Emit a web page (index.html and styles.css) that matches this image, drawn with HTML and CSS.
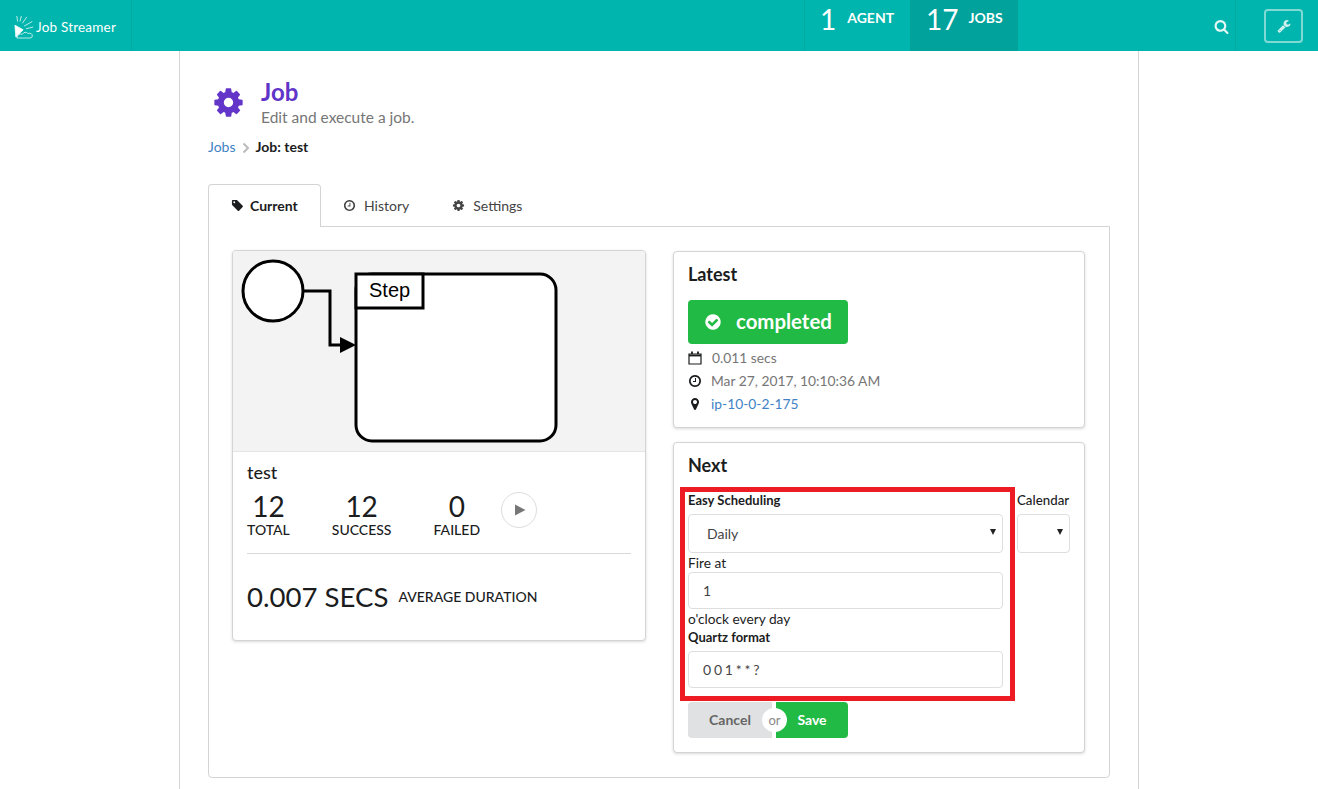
FILE: index.html
```html
<!doctype html>
<html>
<head>
<meta charset="UTF-8">
<title>Job Streamer</title>
<link rel="stylesheet" href="styles.css">
</head>
<body>
<header class="topbar">
	<a class="brand">
		<svg class="brand_logo" viewBox="0 0 24 26" fill="none" stroke="#fff" stroke-width="0.8">
			<path d="M1 11 L10 16 L2 24 Z" fill="#fff"/>
			<path d="M3 1 L4 7 M8 1 L6.500 7 M14 2 L9 9 M20 7 L11 12 M21 13 L13 15"/>
			<path d="M3 25 Q5 19 9 21 Q12 17 15 20 Q20 19 20 23 Q20 25 17 25 Z" fill="#00b5ad"/>
		</svg>
		<span>Job Streamer</span>
	</a>
	<div class="topbar_stats">
		<a class="stat_item"><b>1</b><span>AGENT</span></a>
		<a class="stat_item active"><b>17</b><span>JOBS</span></a>
	</div>
	<div class="topbar_search">
		<svg class="ico" viewBox="0 0 1792 1792"><path d="M1216 832q0-185-131.500-316.500t-316.500-131.500-316.500 131.500-131.500 316.500 131.500 316.500 316.500 131.500 316.500-131.500 131.500-316.500zm512 832q0 52-38 90t-90 38q-54 0-90-38l-343-342q-179 124-399 124-143 0-273.500-55.500t-225-150-150-225-55.500-273.500 55.500-273.500 150-225 225-150 273.500-55.500 273.500 55.500 225 150 150 225 55.500 273.500q0 220-124 399l343 343q37 37 37 90z"/></svg>
	</div>
	<div class="topbar_tool">
		<button class="tool_btn">
			<svg class="ico" viewBox="0 0 1792 1792"><path d="M448 1472q0-26-19-45t-45-19-45 19-19 45 19 45 45 19 45-19 19-45zm644-420l-682 682q-37 37-90 37-52 0-91-37l-106-108q-38-36-38-90 0-53 38-91l681-681q39 98 114.500 173.500t173.500 114.500zm634-435q0 39-23 106-47 134-164.500 217.500t-258.500 83.500q-185 0-316.500-131.500t-131.500-316.500 131.500-316.500 316.500-131.500q58 0 121.500 16.500t107.500 46.500q16 11 16 28t-16 28l-293 169v224l193 107q5-3 79-48.500t135.500-81 70.500-35.500q15 0 23.500 10t8.500 25z"/></svg>
		</button>
	</div>
</header>

<main class="page">
	<div class="page_head">
		<svg class="page_icon" viewBox="0 0 1792 1792"><path d="M1152 896q0-106-75-181t-181-75-181 75-75 181 75 181 181 75 181-75 75-181zm512-109v222q0 12-8 23t-20 13l-185 28q-19 54-39 91 35 50 107 138 10 12 10 25t-9 23q-27 37-99 108t-94 71q-12 0-26-9l-138-108q-44 23-91 38-16 136-29 186-7 28-36 28h-222q-14 0-24.500-8.500t-11.500-21.500l-28-184q-49-16-90-37l-141 107q-10 9-25 9-14 0-25-11-126-114-165-168-7-10-7-23 0-12 8-23 15-21 51-66.500t54-70.500q-27-50-41-99l-183-27q-13-2-21-12.500t-8-23.500v-222q0-12 8-23t19-13l186-28q14-46 39-92-40-57-107-138-10-12-10-24 0-10 9-23 26-36 98.500-107.500t94.500-71.500q13 0 26 10l138 107q44-23 91-38 16-136 29-186 7-28 36-28h222q14 0 24.500 8.500t11.500 21.500l28 184q49 16 90 37l142-107q9-9 24-9 13 0 25 10 129 119 165 170 7 8 7 22 0 12-8 23-15 21-51 66.500t-54 70.500q26 50 41 98l183 28q13 2 21 12.500t8 23.500z"/></svg>
		<div>
			<h1>Job</h1>
			<p>Edit and execute a job.</p>
		</div>
	</div>
	<div class="crumbs">
		<a>Jobs</a>
		<svg class="crumb_sep" viewBox="0 0 8 12" fill="none" stroke="#bbb" stroke-width="2"><path d="M1.500 1.500 L6 6 L1.500 10.500"/></svg>
		<b>Job: test</b>
	</div>

	<nav class="tabs">
		<a class="tab active">
			<svg class="ico" viewBox="0 0 1792 1792"><path d="M576 448q0-53-37.500-90.500t-90.500-37.500-90.500 37.500-37.500 90.500 37.500 90.500 90.500 37.500 90.500-37.500 37.500-90.500zm1067 576q0 53-37 90l-491 492q-39 37-91 37-53 0-90-37l-715-716q-38-37-64.500-101t-26.500-117v-416q0-52 38-90t90-38h416q53 0 117 26.500t102 64.500l715 714q37 39 37 91z"/></svg>
			Current
		</a>
		<a class="tab">
			<svg class="ico" viewBox="0 0 1792 1792"><path d="M1024 544v448q0 14-9 23t-23 9h-320q-14 0-23-9t-9-23v-64q0-14 9-23t23-9h224v-352q0-14 9-23t23-9h64q14 0 23 9t9 23zm416 352q0-148-73-273t-198-198-273-73-273 73-198 198-73 273 73 273 198 198 273 73 273-73 198-198 73-273zm224 0q0 209-103 385.500t-279.500 279.500-385.500 103-385.500-103-279.500-279.500-103-385.500 103-385.500 279.500-279.500 385.500-103 385.500 103 279.500 279.500 103 385.500z"/></svg>
			History
		</a>
		<a class="tab">
			<svg class="ico" viewBox="0 0 1792 1792"><path d="M1152 896q0-106-75-181t-181-75-181 75-75 181 75 181 181 75 181-75 75-181zm512-109v222q0 12-8 23t-20 13l-185 28q-19 54-39 91 35 50 107 138 10 12 10 25t-9 23q-27 37-99 108t-94 71q-12 0-26-9l-138-108q-44 23-91 38-16 136-29 186-7 28-36 28h-222q-14 0-24.500-8.500t-11.500-21.500l-28-184q-49-16-90-37l-141 107q-10 9-25 9-14 0-25-11-126-114-165-168-7-10-7-23 0-12 8-23 15-21 51-66.500t54-70.500q-27-50-41-99l-183-27q-13-2-21-12.500t-8-23.500v-222q0-12 8-23t19-13l186-28q14-46 39-92-40-57-107-138-10-12-10-24 0-10 9-23 26-36 98.500-107.500t94.500-71.500q13 0 26 10l138 107q44-23 91-38 16-136 29-186 7-28 36-28h222q14 0 24.500 8.500t11.500 21.500l28 184q49 16 90 37l142-107q9-9 24-9 13 0 25 10 129 119 165 170 7 8 7 22 0 12-8 23-15 21-51 66.500t-54 70.500q26 50 41 98l183 28q13 2 21 12.500t8 23.500z"/></svg>
			Settings
		</a>
	</nav>

	<section class="tab_body">
		<article class="card job_card">
			<div class="diagram">
				<svg viewBox="0 0 412 200" width="412" height="200">
					<circle cx="40" cy="40" r="30" fill="#fff" stroke="#000" stroke-width="3"/>
					<path d="M70 40 H97 V94 H108" fill="none" stroke="#000" stroke-width="3"/>
					<path d="M107 86 L123 94 L107 102 Z" fill="#000"/>
					<rect x="123" y="23" width="200" height="167" rx="16" fill="#fff" stroke="#000" stroke-width="3"/>
					<rect x="123" y="23" width="67" height="34" fill="#fff" stroke="#000" stroke-width="3"/>
					<text x="136" y="46" class="step_label">Step</text>
				</svg>
			</div>
			<div class="job_body">
				<h3>test</h3>
				<div class="job_stats">
					<div class="job_stat"><b>12</b><span>TOTAL</span></div>
					<div class="job_stat"><b>12</b><span>SUCCESS</span></div>
					<div class="job_stat"><b>0</b><span>FAILED</span></div>
					<button class="play_btn"><svg viewBox="0 0 12 12" width="12" height="12"><path d="M1 0.500 L11.500 6 L1 11.500 Z" fill="#777"/></svg></button>
				</div>
				<div class="job_avg">
					<b>0.007 SECS</b>
					<span>AVERAGE DURATION</span>
				</div>
			</div>
		</article>

		<div class="side">
			<article class="card latest_card">
				<h3>Latest</h3>
				<div class="status_btn">
					<svg class="ico" viewBox="0 0 1792 1792"><path d="M1412 734q0-28-18-46l-91-90q-19-19-45-19t-45 19l-408 407-226-226q-19-19-45-19t-45 19l-91 90q-18 18-18 46 0 27 18 45l362 362q19 19 45 19 27 0 46-19l543-543q18-18 18-45zm252 162q0 209-103 385.500t-279.500 279.500-385.500 103-385.500-103-279.500-279.500-103-385.500 103-385.500 279.500-279.500 385.500-103 385.500 103 279.500 279.500 103 385.500z"/></svg>
					<span>completed</span>
				</div>
				<ul class="meta">
					<li>
						<svg class="ico ico_line" viewBox="0 0 14 14"><path d="M1 3 H13 V13 H1 Z" stroke-width="1.200"/><path d="M1 4.500 H13" stroke-width="1.800"/><path d="M4 0.500 V3 M10 0.500 V3" stroke-width="1.800"/></svg>
						<span class="meta_pad">0.011 secs</span>
					</li>
					<li>
						<svg class="ico" viewBox="0 0 1792 1792"><path d="M1024 544v448q0 14-9 23t-23 9h-320q-14 0-23-9t-9-23v-64q0-14 9-23t23-9h224v-352q0-14 9-23t23-9h64q14 0 23 9t9 23zm416 352q0-148-73-273t-198-198-273-73-273 73-198 198-73 273 73 273 198 198 273 73 273-73 198-198 73-273zm224 0q0 209-103 385.500t-279.500 279.500-385.500 103-385.500-103-279.500-279.500-103-385.500 103-385.500 279.500-279.500 385.500-103 385.500 103 279.500 279.500 103 385.500z"/></svg>
						<span>Mar 27, 2017, 10:10:36 AM</span>
					</li>
					<li>
						<svg class="ico" viewBox="0 0 1792 1792"><path d="M1152 640q0-106-75-181t-181-75-181 75-75 181 75 181 181 75 181-75 75-181zm256 0q0 109-33 179l-364 774q-16 33-47.500 52t-67.500 19-67.500-19-46.500-52l-365-774q-33-70-33-179 0-212 150-362t362-150 362 150 150 362z"/></svg>
						<a>ip-10-0-2-175</a>
					</li>
				</ul>
			</article>

			<article class="card next_card">
				<h3>Next</h3>
				<form class="sched">
					<div class="sched_main">
						<label class="lbl_strong">Easy Scheduling</label>
						<div class="select_wrap">
							<select class="field"><option>Daily</option></select>
						</div>
						<label class="lbl_fire">Fire at</label>
						<input class="field" value="1">
						<div class="lbl_clock">o'clock every day</div>
						<label class="lbl_strong lbl_quartz">Quartz format</label>
						<input class="field field_quartz" value="0 0 1 * * ?">
					</div>
					<div class="sched_cal">
						<label class="lbl_strong lbl_cal">Calendar</label>
						<div class="select_wrap">
							<select class="field"><option></option></select>
						</div>
					</div>
				</form>
				<div class="btn_pair">
					<button type="button" class="btn_cancel">Cancel</button>
					<span class="btn_or">or</span>
					<button type="button" class="btn_save">Save</button>
				</div>
			</article>
		</div>
	</section>
</main>
</body>
</html>
```

FILE: styles.css
```css
*{box-sizing:border-box}
html,body{margin:0;height:100%}
body{
	font-family:"Lato","Noto Sans",sans-serif;
	font-size:14px;
	color:#1b1c1d;
	background:#fff;
	overflow:hidden;
}
a{color:#4183c4}
h1,h3,p,ul{margin:0;padding:0}
.ico{width:1em;height:1em;fill:currentColor;flex:none;display:block}
.ico_line{fill:none;stroke:currentColor}

/* top bar */
.topbar{
	display:flex;
	height:51px;
	background:#00b5ad;
	color:#fff;
}
.brand{
	display:flex;
	align-items:center;
	width:132px;
	padding:2px 0 0 14px;
	border-right:1px solid #00a8a0;
	color:#fff;
	font-size:13.500px;
	letter-spacing:.2px;
}
.brand_logo{width:22px;height:26px;flex:none}
.topbar_stats{
	display:flex;
	margin-left:672px;
	border-left:1px solid #00a8a0;
}
.stat_item{
	display:flex;
	align-items:flex-start;
	width:105px;
	padding:2px 0 0 15px;
	color:#fff;
}
.stat_item.active{
	width:108px;
	background:#00a29b;
	padding-left:16px;
}
.stat_item b{
	font-weight:400;
	font-size:28px;
	line-height:35px;
}
.stat_item span{
	margin-left:11px;
	font-weight:700;
	font-size:14px;
	line-height:32px;
}
.stat_item.active span{margin-left:10px}
.topbar_search{
	display:flex;
	align-items:center;
	justify-content:flex-end;
	width:217px;
	padding:2px 6px 0 0;
	font-size:15px;
	color:#e6f7f6;
}
.topbar_tool{
	display:flex;
	align-items:flex-start;
	flex:1;
	padding:9px 0 0 28px;
	border-left:1px solid #00a8a0;
}
.tool_btn{
	display:flex;
	align-items:center;
	justify-content:center;
	width:39px;
	height:34px;
	padding:0;
	background:none;
	border:2px solid #7fdad6;
	border-radius:4px;
	color:#cdeeec;
	font-size:14px;
}

/* page */
.page{
	width:960px;
	height:738px;
	margin:0 auto;
	padding:0 28px;
	border-left:1px solid #d4d4d5;
	border-right:1px solid #d4d4d5;
}
.page_head{
	display:flex;
	align-items:center;
	padding:26px 0 0 4px;
}
.page_icon{
	width:33px;
	height:33px;
	margin-right:16px;
	fill:#6435c9;
}
.page_head h1{
	font-size:24px;
	font-weight:700;
	line-height:30px;
	color:#5f35c9;
}
.page_head p{
	font-size:15.500px;
	line-height:20px;
	color:#767676;
}
.crumbs{
	display:flex;
	align-items:center;
	height:20px;
	margin-top:9px;
	font-size:14px;
}
.crumb_sep{width:8px;height:12px;margin:4px 6px 0 6px}
.crumbs b{font-weight:700}

.tabs{
	display:flex;
	margin-top:28px;
	height:42px;
}
.tab{
	display:flex;
	align-items:center;
	gap:8px;
	padding:1px 21px 0 22px;
	font-size:14px;
	color:#444;
}
.tab .ico{font-size:13px}
.tab.active{
	width:113px;
	gap:6px;
	padding-top:0;
	padding-bottom:1px;
	background:#fff;
	border:1px solid #d4d4d5;
	border-bottom:0;
	border-radius:4px 4px 0 0;
	color:#1b1c1d;
	font-weight:700;
	position:relative;
	z-index:1;
	height:43px;
}
.tab_body{
	display:flex;
	align-items:flex-start;
	gap:27px;
	height:552px;
	padding:23px 24px 0 23px;
	border:1px solid #d4d4d5;
	border-radius:0 0 4px 4px;
}

.card{
	background:#fff;
	border:1px solid #d4d4d5;
	border-radius:4px;
	box-shadow:0 1px 3px rgba(0,0,0,.15);
}
.card h3{font-size:18px;font-weight:700;line-height:24px}

/* job card */
.job_card{width:414px;height:391px}
.diagram{
	height:201px;
	background:#f3f3f3;
	border-bottom:1px solid #e4e4e4;
	border-radius:3px 3px 0 0;
}
.diagram svg{display:block}
.step_label{font-family:"Liberation Sans",sans-serif;font-size:20px;fill:#000}
.job_body{padding:8px 14px 0 14px}
.job_body h3{font-weight:500;color:#1b1c1d}
.job_stats{
	display:flex;
	align-items:flex-start;
	height:70px;
	padding-top:8px;
	border-bottom:1px solid #d9d9d9;
}
.job_stat{
	display:flex;
	flex-direction:column;
	align-items:center;
	margin-right:42px;
}
.job_stat b{font-weight:400;font-size:28px;line-height:28px}
.job_stat span{font-size:14px;font-weight:500;line-height:18px;margin-top:1px}
.play_btn{
	display:flex;
	align-items:center;
	justify-content:center;
	width:36px;
	height:36px;
	margin:0 0 0 -21px;
	padding:0 0 0 2px;
	background:#fff;
	border:1px solid #ddd;
	border-radius:50%;
}
.job_avg{
	display:flex;
	align-items:center;
	gap:10px;
	margin-top:26px;
}
.job_avg b{font-weight:400;font-size:27.600px;line-height:34px}
.job_avg span{font-size:14px;font-weight:500;padding-bottom:2px}

/* right column */
.side{width:412px;padding-top:1px;display:flex;flex-direction:column;gap:14px}
.latest_card{height:177px;padding:10px 14px 0 14px}
.status_btn{
	display:flex;
	align-items:center;
	gap:14px;
	width:160px;
	height:44px;
	margin-top:14px;
	padding-left:16px;
	background:#21ba45;
	border-radius:4px;
	color:#fff;
	font-size:20.400px;
	font-weight:700;
}
.status_btn .ico{font-size:18px}
.status_btn span{padding-bottom:2px}
.meta{list-style:none;margin-top:2px}
.meta li{
	display:flex;
	align-items:center;
	gap:9px;
	height:23px;
	font-size:13.800px;
	color:#767676;
}
.meta .ico{font-size:14px;color:#1b1c1d}
.meta .meta_pad{margin-left:1px}

.next_card{height:311px;padding:10px 14px 0 14px}
.sched{display:flex;gap:14px;margin-top:14px}
.sched_main{position:relative;width:315px}
.sched_main::after{
	content:"";
	position:absolute;
	top:-4px;
	left:-8px;
	right:-12px;
	bottom:-13px;
	border:5px solid #ed1c24;
	pointer-events:none;
}
.sched_cal{width:53px}
.sched label,.lbl_clock{display:block;font-size:13.700px;line-height:18px}
.sched .lbl_strong{font-size:13px;font-weight:700}
.sched .lbl_cal{font-size:13.300px;font-weight:500;white-space:nowrap}
.lbl_fire{margin-top:1px}
.sched .lbl_clock{margin-top:1px}
.lbl_quartz{margin-bottom:5px}
.field{
	display:block;
	width:100%;
	height:37px;
	padding:0 14px;
	background:#fff;
	border:1px solid #dedede;
	border-radius:4px;
	font-family:inherit;
	font-size:14px;
	color:#444;
	outline:0;
}
.field_quartz{word-spacing:-.800px}
.select_wrap{position:relative;margin-top:5px}
.select_wrap .field{
	height:39px;
	padding-left:18px;
	appearance:none;
	-webkit-appearance:none;
}
.select_wrap::after{
	content:"";
	position:absolute;
	right:7px;
	top:15px;
	border-left:3px solid transparent;
	border-right:3px solid transparent;
	border-top:6px solid #222;
}
.btn_pair{
	position:relative;
	display:flex;
	width:160px;
	height:36px;
	margin-top:14px;
	font-size:14px;
	font-weight:700;
}
.btn_pair button{
	height:36px;
	padding:0 0 1px 0;
	border:0;
	font:inherit;
}
.btn_cancel{
	width:84px;
	margin-right:4px;
	background:#e0e1e2;
	color:#666;
	border-radius:4px 0 0 4px;
}
.btn_save{
	width:72px;
	background:#21ba45;
	color:#fff;
	border-radius:0 4px 4px 0;
}
.btn_or{
	position:absolute;
	left:74px;
	top:6px;
	width:25px;
	height:24px;
	background:#fff;
	border-radius:50%;
	color:#888;
	font-weight:400;
	font-size:13px;
	line-height:24px;
	text-align:center;
}
```
